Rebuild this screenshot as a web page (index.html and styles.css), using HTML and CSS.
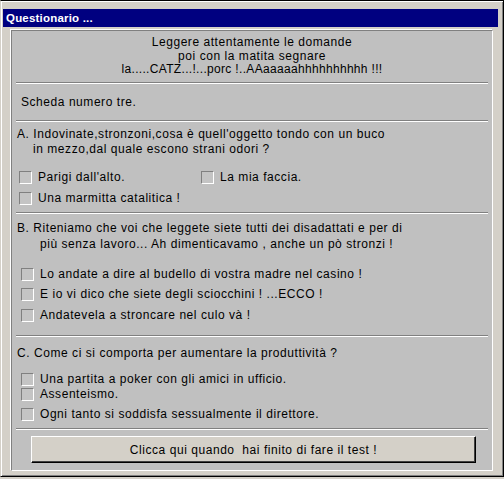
FILE: index.html
```html
<!DOCTYPE html>
<html lang="it">
<head>
<meta charset="utf-8">
<title>Questionario ...</title>
<link rel="stylesheet" href="styles.css">
</head>
<body>
<div class="window">
  <div class="titlebar">Questionario ...</div>
  <div class="panel">
    <div class="header">
      <div>Leggere attentamente le domande</div>
      <div>poi con la matita segnare</div>
      <div class="tight">la.....CATZ...!...porc !..AAaaaaahhhhhhhhhh !!!</div>
    </div>
    <div class="sep sep-1"></div>
    <div class="scheda">Scheda numero tre.</div>
    <div class="sep sep-2"></div>

    <div class="question q-a">
      <div>A. Indovinate,stronzoni,cosa è quell'oggetto tondo con un buco</div>
      <div class="cont cont-a">in mezzo,dal quale escono strani odori ?</div>
    </div>
    <div class="row row-a1">
      <label class="opt opt-a"><span class="box"></span><span>Parigi dall'alto.</span></label>
      <label class="opt opt-a2"><span class="box"></span><span>La mia faccia.</span></label>
    </div>
    <div class="row row-a2">
      <label class="opt opt-a"><span class="box"></span><span>Una marmitta catalitica !</span></label>
    </div>
    <div class="sep sep-3"></div>

    <div class="question q-b">
      <div>B. Riteniamo che voi che leggete siete tutti dei disadattati e per di</div>
      <div class="cont cont-b">più senza lavoro... Ah dimenticavamo , anche un pò stronzi !</div>
    </div>
    <div class="row row-b1">
      <label class="opt"><span class="box"></span><span>Lo andate a dire al budello di vostra madre nel casino !</span></label>
    </div>
    <div class="row row-b2">
      <label class="opt"><span class="box"></span><span>E io vi dico che siete degli sciocchini ! ...ECCO !</span></label>
    </div>
    <div class="row row-b3">
      <label class="opt"><span class="box"></span><span>Andatevela a stroncare nel culo và !</span></label>
    </div>
    <div class="sep sep-4"></div>

    <div class="question q-c">
      <div>C. Come ci si comporta per aumentare la produttività ?</div>
    </div>
    <div class="row row-c1">
      <label class="opt"><span class="box"></span><span>Una partita a poker con gli amici in ufficio.</span></label>
    </div>
    <div class="row row-c2">
      <label class="opt"><span class="box"></span><span>Assenteismo.</span></label>
    </div>
    <div class="row row-c3">
      <label class="opt"><span class="box"></span><span>Ogni tanto si soddisfa sessualmente il direttore.</span></label>
    </div>
    <div class="sep sep-5"></div>

    <button class="submit" type="button">Clicca qui quando&nbsp; hai finito di fare il test !</button>
  </div>
</div>
</body>
</html>
```

FILE: styles.css
```css
html, body {
  margin: 0;
  padding: 0;
  background: #d4d0c8;
}

.window {
  width: 504px;
  height: 477px;
  box-sizing: border-box;
  border-top: 1px solid #000;
  border-left: 1px solid #d4d0c8;
  border-right: 1px solid #000;
  border-bottom: 1px solid #000;
  box-shadow: inset 1px 1px #fff, inset -1px -1px #808080;
  padding: 8px 5px 0 2px;
  background: #d4d0c8;
  font-family: "Liberation Sans", Arial, sans-serif;
  font-size: 12px;
  letter-spacing: 0.55px;
  color: #000;
}

.titlebar {
  height: 18px;
  line-height: 18px;
  background: #000080;
  color: #fff;
  font-weight: bold;
  font-size: 11.5px;
  letter-spacing: 0.2px;
  padding-left: 3px;
  white-space: nowrap;
}

.panel {
  margin: 3px 5px 0 8px;
  height: 441px;
  box-sizing: border-box;
  border: 1px solid;
  border-color: #808080 #fff #fff #808080;
  box-shadow: -1px -1px 0 #fff;
  background: #c0c0c0;
  padding: 0 4px;
  display: flex;
  flex-direction: column;
  align-items: stretch;
}

.header {
  margin-top: 5px;
  text-align: center;
  line-height: 13.5px;
  white-space: nowrap;
}
.tight { letter-spacing: 0.32px; }

.sep {
  border-top: 1px solid #808080;
  border-bottom: 1px solid #fff;
  height: 0;
  flex: none;
}
.sep-1 { margin-top: 5.5px; }
.sep-2 { margin-top: 10.5px; }
.sep-3 { margin-top: 7px; }
.sep-4 { margin-top: 13px; }
.sep-5 { margin-top: 7px; }

.scheda {
  margin-top: 12px;
  padding-left: 5px;
  line-height: 13.5px;
  white-space: nowrap;
}

.question {
  padding-left: 1px;
  white-space: nowrap;
  line-height: 15px;
}
.q-a { margin-top: 5px; }
.q-b { margin-top: 6px; line-height: 16px; }
.q-c { margin-top: 9px; }
.cont-a { padding-left: 16px; }
.cont-b { padding-left: 23px; }

.row {
  display: flex;
  height: 13px;
  line-height: 13px;
  padding-left: 5px;
  white-space: nowrap;
  flex: none;
}
.row-a1 { margin-top: 14px; padding-left: 3px; }
.row-a2 { margin-top: 8px; padding-left: 3px; }
.row-b1 { margin-top: 16px; }
.row-b2 { margin-top: 7px; }
.row-b3 { margin-top: 8px; }
.row-c1 { margin-top: 12px; }
.row-c2 { margin-top: 2px; }
.row-c3 { margin-top: 7px; }

.opt {
  display: flex;
  align-items: center;
  gap: 6px;
}
.opt-a { width: 160px; }
.opt-a2 { margin-left: 22px; }

.box {
  width: 13px;
  height: 13px;
  box-sizing: border-box;
  border: 1px solid;
  border-color: #808080 #fff #fff #808080;
  background: #c4c4c4;
  flex: none;
}

.submit {
  margin: 6px 0 0 15px;
  width: 445px;
  height: 27px;
  box-sizing: border-box;
  border: 1px solid;
  border-color: #fff #000 #000 #fff;
  box-shadow: inset -1px -1px #404040;
  background: #d4d0c8;
  font-family: "Liberation Sans", Arial, sans-serif;
  font-size: 12px;
  letter-spacing: 0.55px;
  color: #000;
  padding: 0;
  align-self: flex-start;
  white-space: nowrap;
}
```
